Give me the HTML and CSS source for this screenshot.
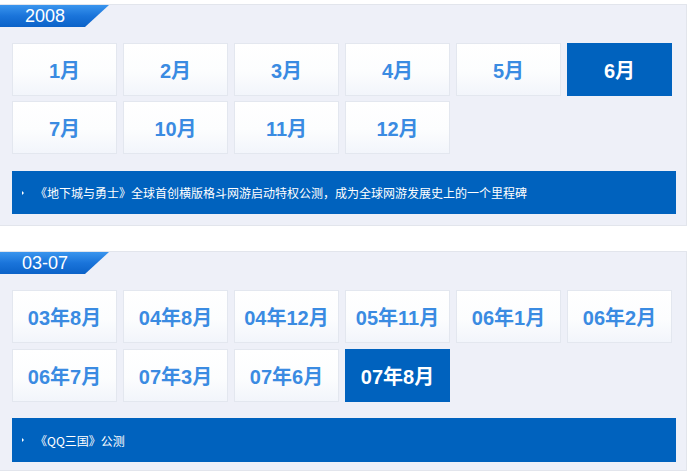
FILE: index.html
```html
<!DOCTYPE html>
<html lang="zh-CN">
<head>
<meta charset="utf-8">
<title>大事记</title>
<link rel="stylesheet" href="styles.css">
</head>
<body>
<section class="year">
  <div class="tab">2008</div>
  <div class="months">
    <div class="month">1月</div>
    <div class="month">2月</div>
    <div class="month">3月</div>
    <div class="month">4月</div>
    <div class="month">5月</div>
    <div class="month active">6月</div>
    <div class="month">7月</div>
    <div class="month">10月</div>
    <div class="month">11月</div>
    <div class="month">12月</div>
  </div>
  <div class="event"><span class="bullet"></span>《地下城与勇士》全球首创横版格斗网游启动特权公测，成为全球网游发展史上的一个里程碑</div>
</section>
<section class="year second">
  <div class="tab">03-07</div>
  <div class="months">
    <div class="month">03年8月</div>
    <div class="month">04年8月</div>
    <div class="month">04年12月</div>
    <div class="month">05年11月</div>
    <div class="month">06年1月</div>
    <div class="month">06年2月</div>
    <div class="month">06年7月</div>
    <div class="month">07年3月</div>
    <div class="month">07年6月</div>
    <div class="month active">07年8月</div>
  </div>
  <div class="event"><span class="bullet"></span>《QQ三国》公测</div>
</section>
</body>
</html>
```
FILE: styles.css
```css
html, body {
  margin: 0;
  padding: 0;
  background: #ffffff;
}
body {
  font-family: "Liberation Sans", Arial, "Noto Sans CJK SC", sans-serif;
  padding-top: 4px;
}
.year {
  width: 686px;
  background: #eef0f8;
  border-top: 1px solid #e2e5ec;
  border-right: 1px solid #e2e5ec;
  border-bottom: 1px solid #e2e5ec;
  padding-bottom: 11px;
}
.year.second {
  margin-top: 25px;
  padding-bottom: 8px;
}
.tab {
  width: 90px;
  padding-right: 19px;
  height: 22px;
  line-height: 22px;
  text-align: center;
  color: #ffffff;
  font-size: 18px;
  background: linear-gradient(180deg, #3a95ee 0%, #1a74da 50%, #0b62c8 100%);
  clip-path: polygon(0 0, 109px 0, 85px 22px, 0 22px);
}
.months {
  display: grid;
  grid-template-columns: repeat(6, 105px);
  grid-auto-rows: 53px;
  column-gap: 6px;
  row-gap: 5px;
  padding: 16px 0 0 12px;
}
.second .months {
  row-gap: 6px;
}
.month {
  box-sizing: border-box;
  border: 1px solid #e3e7ef;
  background: linear-gradient(180deg, #ffffff 0%, #fcfdfe 55%, #f2f5fb 100%);
  color: #3a8be2;
  font-weight: bold;
  font-size: 20px;
  font-family: "Liberation Sans", Arial, "Noto Sans CJK SC", sans-serif;
  display: flex;
  align-items: center;
  justify-content: center;
}
.month.active {
  background: #0062be;
  border-color: #0062be;
  color: #ffffff;
}
.event {
  margin: 17px 0 0 12px;
  width: 664px;
  height: 43px;
  background: #0062be;
  color: #ffffff;
  font-family: "Noto Sans CJK SC", sans-serif;
  font-size: 12px;
  display: flex;
  align-items: center;
}
.second .event {
  margin-top: 16px;
  height: 44px;
}
.bullet {
  width: 0;
  height: 0;
  border-top: 2px solid transparent;
  border-bottom: 2px solid transparent;
  border-left: 2px solid #ffffff;
  margin: 0 11px 0 10px;
}
```
